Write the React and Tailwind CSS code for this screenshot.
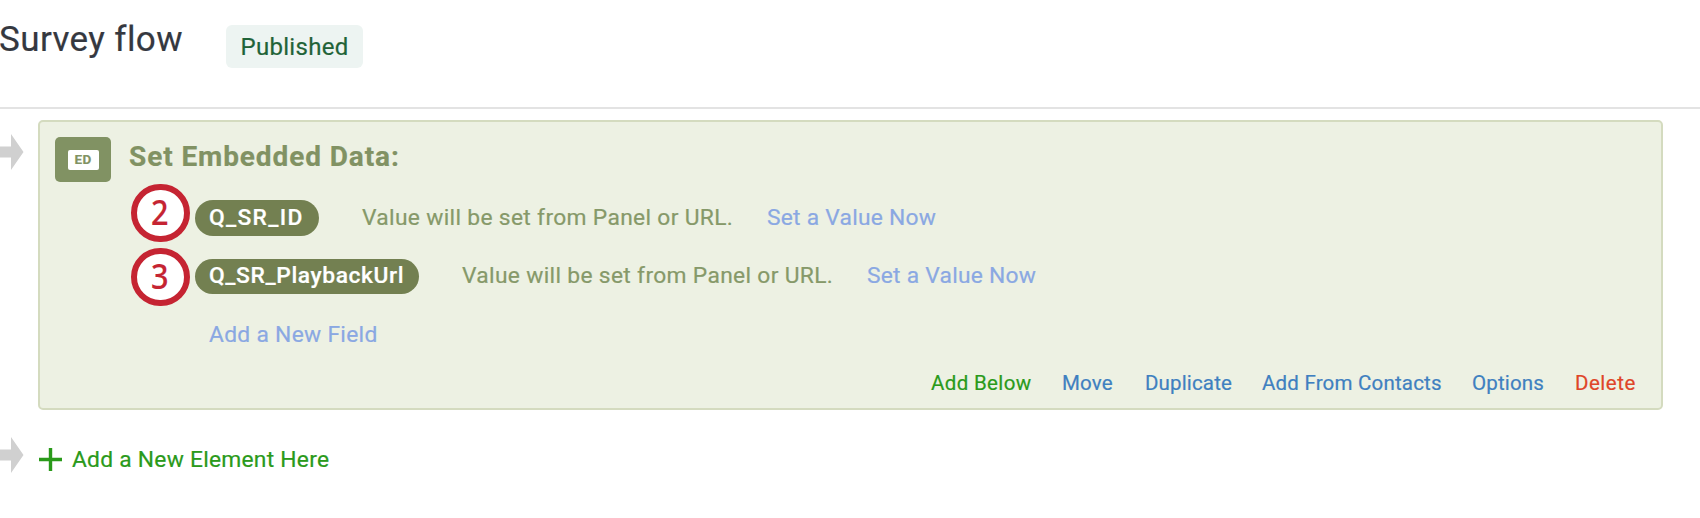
import clsx from 'clsx';

const fields = [
  { step: 2, name: 'Q_SR_ID', row: 'mt-[5px]', pill: 'h-9 w-[124px]', text: 'tracking-[1.3px]' },
  { step: 3, name: 'Q_SR_PlaybackUrl', row: '-mt-px', pill: 'h-[35px] w-[224px]', text: 'tracking-[0.6px]' },
];

const actions = [
  { label: 'Add Below', className: 'w-[131px] tracking-[0.35px] text-[#2a9a1a]' },
  { label: 'Move', className: 'w-[83px] tracking-[0.2px] text-[#3f80c0]' },
  { label: 'Duplicate', className: 'w-[117px] tracking-[0.15px] text-[#3f80c0]' },
  { label: 'Add From Contacts', className: 'w-[210px] tracking-[0.2px] text-[#3f80c0]' },
  { label: 'Options', className: 'w-[103px] tracking-[0.15px] text-[#3f80c0]' },
  { label: 'Delete', className: 'w-[60px] tracking-[0.5px] text-[#df4528]' },
];

const Arrow = () => (
  <svg width="24" height="36" viewBox="0 0 24 36" className="shrink-0" fill="#d0d0d0">
    <path d="M0 12.5H11V0L23.5 18L11 36V23.5H0Z" />
  </svg>
);

const Step = ({ number }) => (
  <div className="flex h-[58px] w-[59px] shrink-0 items-center justify-center rounded-full border-[6px] border-[#c52432] bg-white pr-[2px] font-['Noto_Sans',sans-serif] text-[34px] leading-none font-medium text-[#c52432]">
    <span className="-mt-[2px] scale-x-[0.9]">{number}</span>
  </div>
);

const Field = ({ step, name, row, pill, text }) => (
  <div className="flex h-[58px] items-start">
    <Step number={step} />
    <div className={clsx('flex h-[58px] items-center', row)}>
      <div className={clsx('ml-[5px] flex shrink-0 items-center rounded-full bg-[#738051] pl-[14px] font-medium whitespace-nowrap text-white', pill)}>
        <span className={text}>{name}</span>
      </div>
      <span className="ml-[43px] w-[405px] shrink-0 tracking-[0.33px] whitespace-nowrap text-[#869969]">
        Value will be set from Panel or URL.
      </span>
      <a className="tracking-[0.25px] whitespace-nowrap text-[#8aa8e2]">Set a Value Now</a>
    </div>
  </div>
);

export default function App() {
  return (
    <div className="h-[518px] overflow-hidden bg-white font-[Roboto,sans-serif] text-[22.8px] leading-[28px] [-webkit-text-stroke:0.2px]">
      <header className="flex h-[109px] items-start border-b-2 border-[#e3e3e3]">
        <h1 className="mt-5 -ml-px w-[227px] shrink-0 text-[35px] leading-[40px] tracking-[0.4px] whitespace-nowrap text-[#35383f]">Survey flow</h1>
        <span className="mt-[25px] flex h-[43px] w-[137px] items-center justify-center rounded-md bg-[#edf4f2] text-[24px] tracking-[0.3px] text-[#1f6338]">
          Published
        </span>
      </header>

      <main>
        <div className="flex items-start pt-[11px]">
          <div className="mt-[14px] w-[38px] shrink-0">
            <Arrow />
          </div>
          <section className="flex h-[290px] w-[1625px] rounded-[5px] border-2 border-[#d4dbbf] bg-[#edf1e3]">
            <div className="mt-[15px] ml-[15px] flex h-[45px] w-14 shrink-0 items-center justify-center rounded-[5px] bg-[#819263]">
              <div className="flex h-5 w-[31px] items-center justify-center rounded-[2px] bg-white text-[13.5px] leading-none font-bold tracking-[0.4px] text-[#819263]">
                ED
              </div>
            </div>
            <div className="ml-5 flex flex-1 flex-col">
              <h2 className="mt-[18px] -ml-[2px] text-[28px] leading-[34px] font-bold tracking-[0.9px] text-[#819263]">Set Embedded Data:</h2>
              <div className="mt-[10px] flex flex-col gap-[6px]">
                {fields.map((field) => (
                  <Field key={field.name} {...field} />
                ))}
              </div>
              <a className="mt-[15px] ml-[78px] tracking-[0.3px] text-[#8aa8e2]">Add a New Field</a>
              <div className="mt-[22px] ml-[800px] flex text-[20.5px] leading-[24px] whitespace-nowrap">
                {actions.map(({ label, className }) => (
                  <a key={label} className={clsx('shrink-0', className)}>{label}</a>
                ))}
              </div>
            </div>
          </section>
        </div>

        <div className="mt-[27px] flex items-start text-[#2a9a1a]">
          <Arrow />
          <svg width="23" height="23" viewBox="0 0 23 23" className="mt-[11px] ml-[15px]" stroke="currentColor" strokeWidth="3.4">
            <path d="M11.5 0V23M0 11.5H23" />
          </svg>
          <a className="mt-[9px] ml-[10px] tracking-[0.25px]">Add a New Element Here</a>
        </div>
      </main>
    </div>
  );
}
